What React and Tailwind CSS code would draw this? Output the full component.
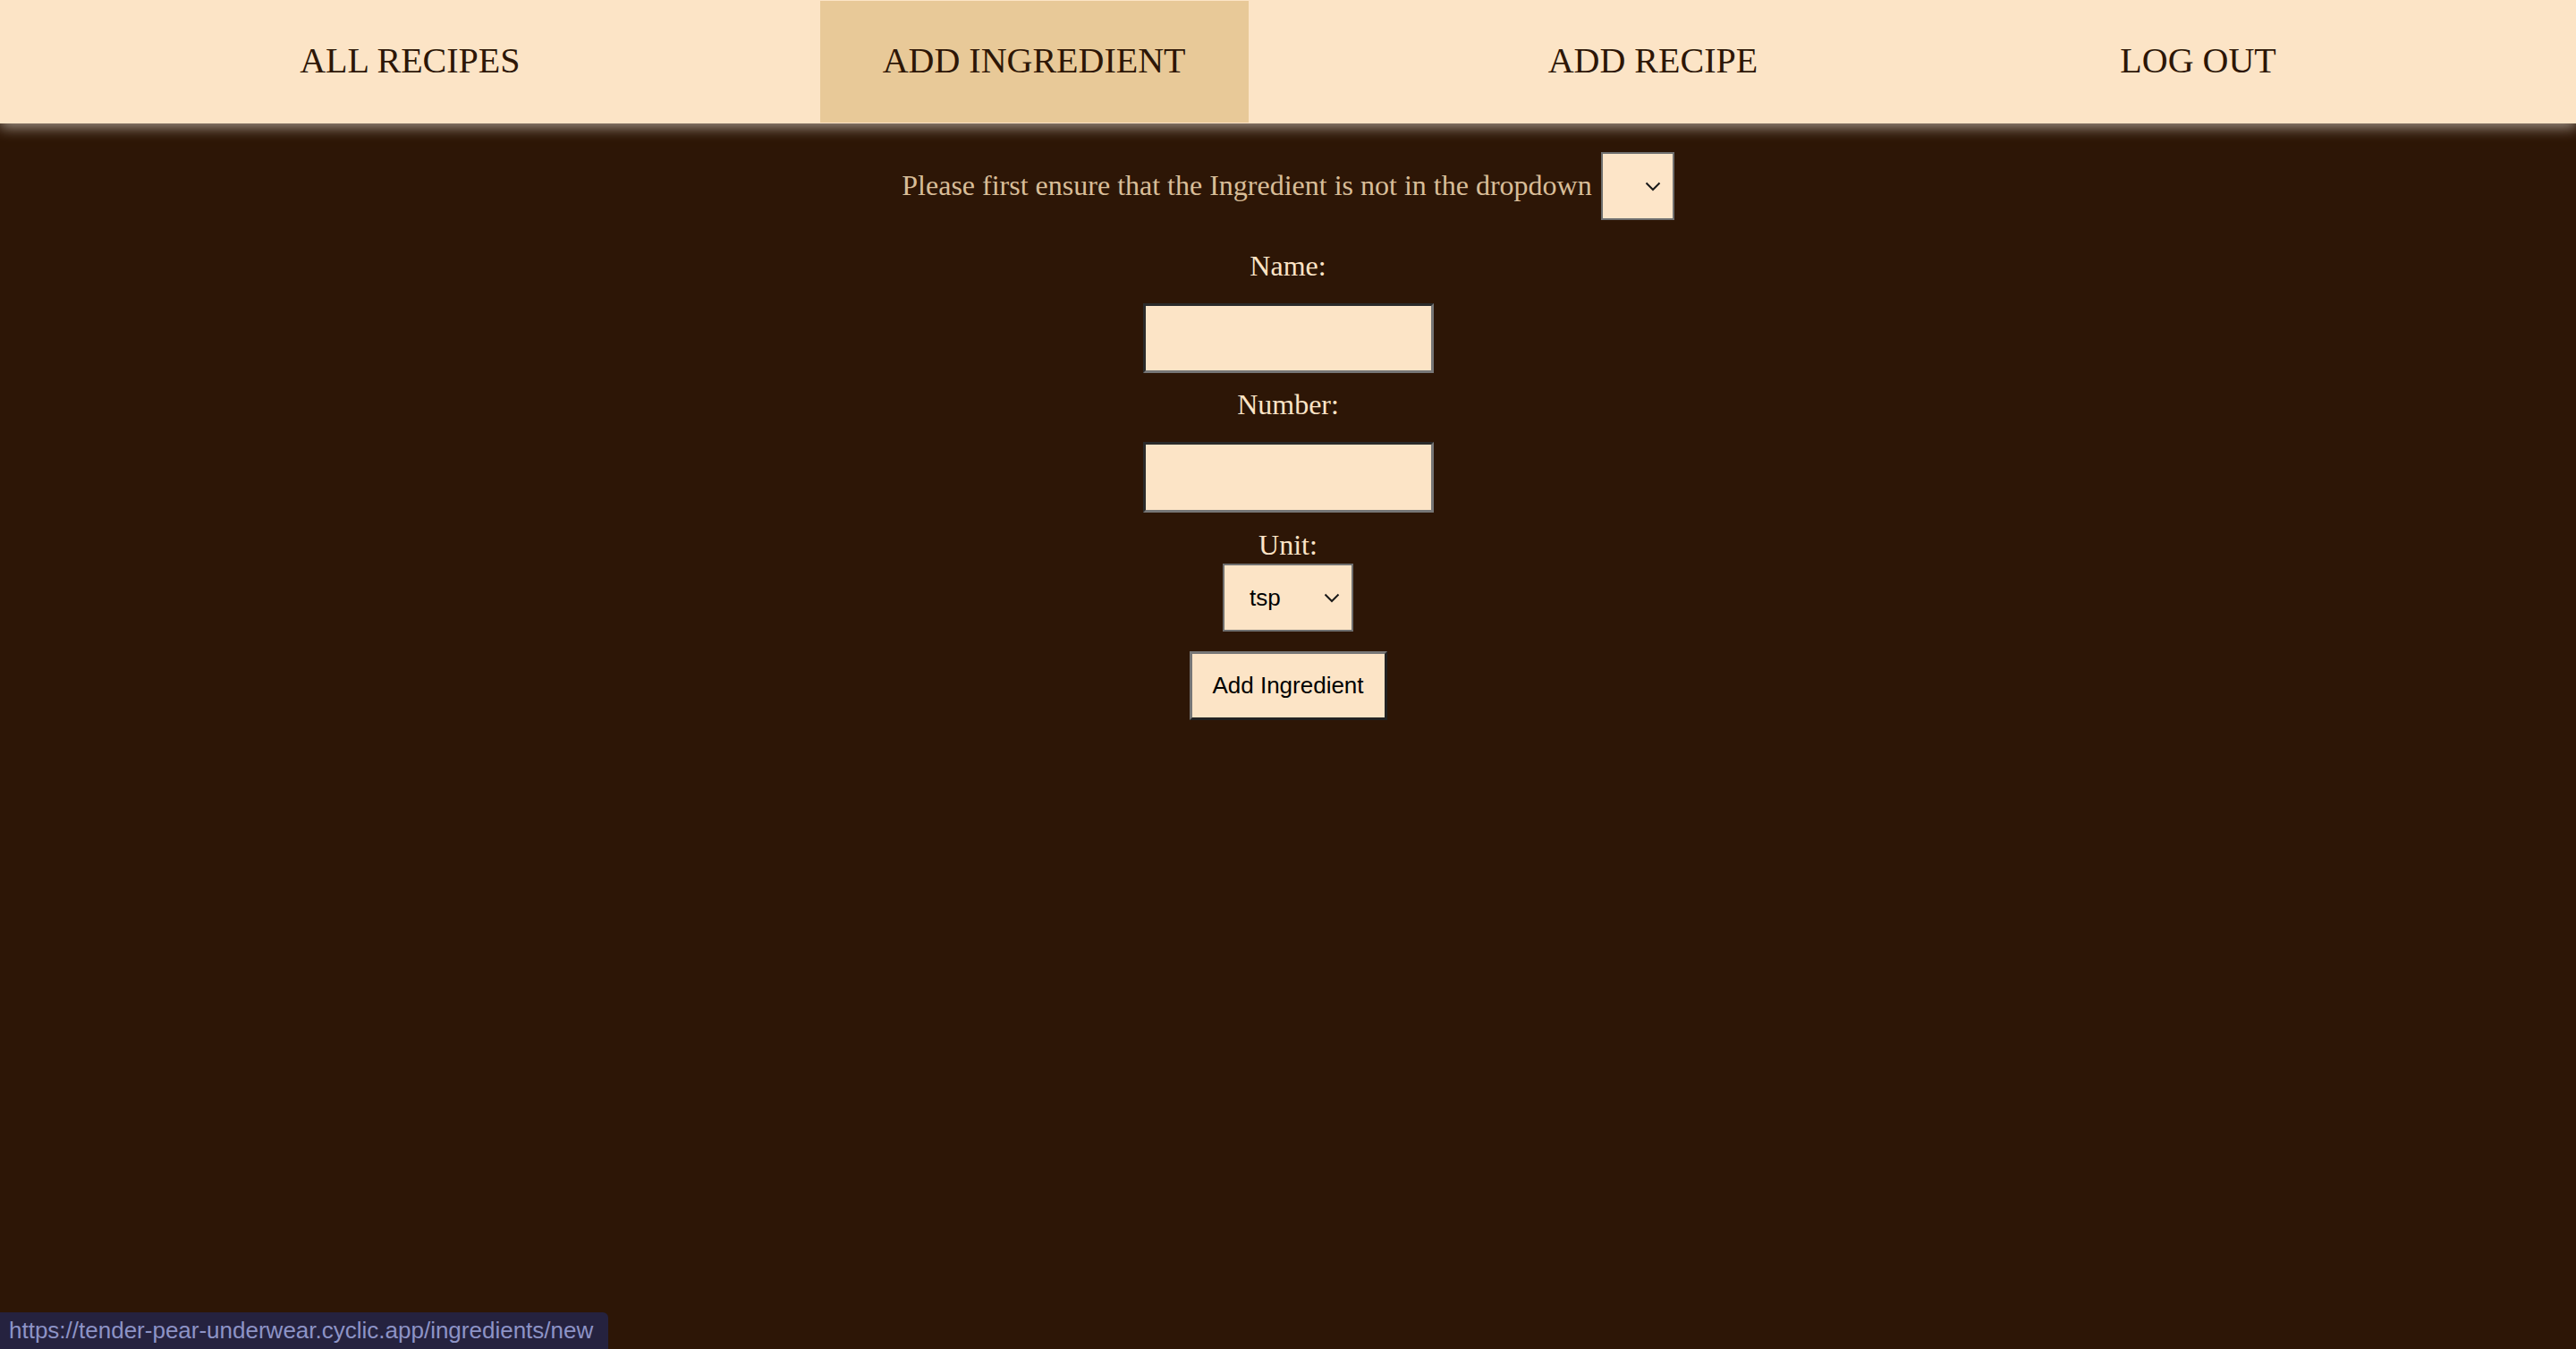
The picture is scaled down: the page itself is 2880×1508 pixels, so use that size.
import React from "react";

const NAV = [
  { label: "ALL RECIPES", active: false },
  { label: "ADD INGREDIENT", active: true },
  { label: "ADD RECIPE", active: false },
  { label: "LOG OUT", active: false },
];

const Chevron = () => (
  <svg width="18" height="11" viewBox="0 0 18 11" className="shrink-0">
    <path d="M1.5 1.5 L9 9 L16.5 1.5" fill="none" stroke="#1a1a1a" strokeWidth="2" />
  </svg>
);

const App = () => {
  return (
    <div className="min-h-[1508px] bg-[#2d1606] relative font-['Liberation_Serif',serif]">
      {/* Nav */}
      <nav className="h-[138px] bg-[#fce4c6] flex justify-evenly shadow-[0_5px_14px_rgba(190,180,170,0.75)] relative z-10">
        {NAV.map((item) => (
          <a
            key={item.label}
            className={`h-[136px] mt-px pb-[3px] px-[70px] flex items-center text-[40px] text-[#2d1606] ${
              item.active ? "bg-[#e8c998]" : ""
            }`}
          >
            {item.label}
          </a>
        ))}
      </nav>

      {/* Form */}
      <div className="flex flex-col items-center">
        <div className="mt-[32px] flex items-center gap-[10px]">
          <span className="text-[32px] text-[#d8bd98] mb-[3px]">
            Please first ensure that the Ingredient is not in the dropdown
          </span>
          <div className="w-[82px] h-[76px] bg-[#fde5c8] border-2 border-[#6f6f6f] flex items-center justify-end pr-[13px]">
            <Chevron />
          </div>
        </div>

        <label className="mt-[33px] text-[32px] leading-[37px] text-[#fce4c6]">Name:</label>
        <div className="mt-[23px] w-[325px] h-[78px] bg-[#fce4c6] border-[3px] border-t-[#2a2a2a] border-l-[#2a2a2a] border-b-[#767676] border-r-[#767676]" />

        <label className="mt-[17px] text-[32px] leading-[37px] text-[#fce4c6]">Number:</label>
        <div className="mt-[23px] w-[325px] h-[79px] bg-[#fce4c6] border-[3px] border-t-[#2a2a2a] border-l-[#2a2a2a] border-b-[#767676] border-r-[#767676]" />

        <label className="mt-[18px] text-[32px] leading-[37px] text-[#fce4c6]">Unit:</label>
        <div className="mt-[2px] w-[146px] h-[76px] bg-[#fce4c6] border-2 border-[#6f6f6f] flex items-center justify-between pl-[28px] pr-[13px] font-['Liberation_Sans',sans-serif] text-[26px] text-black">
          <span>tsp</span>
          <Chevron />
        </div>

        <button className="mt-[22px] w-[221px] h-[77px] bg-[#fce4c6] border-[3px] border-t-[#767676] border-l-[#767676] border-b-[#222222] border-r-[#222222] font-['Liberation_Sans',sans-serif] text-[26px] text-black">
          Add Ingredient
        </button>
      </div>

      {/* Status bar */}
      <div className="absolute left-0 bottom-0 w-[680px] h-[41px] bg-[#25223f] rounded-tr-[6px] flex items-center pl-[10px] font-['Liberation_Sans',sans-serif] text-[26px] text-[#8d93c6]">
        https://tender-pear-underwear.cyclic.app/ingredients/new
      </div>
    </div>
  );
};

export default App;
